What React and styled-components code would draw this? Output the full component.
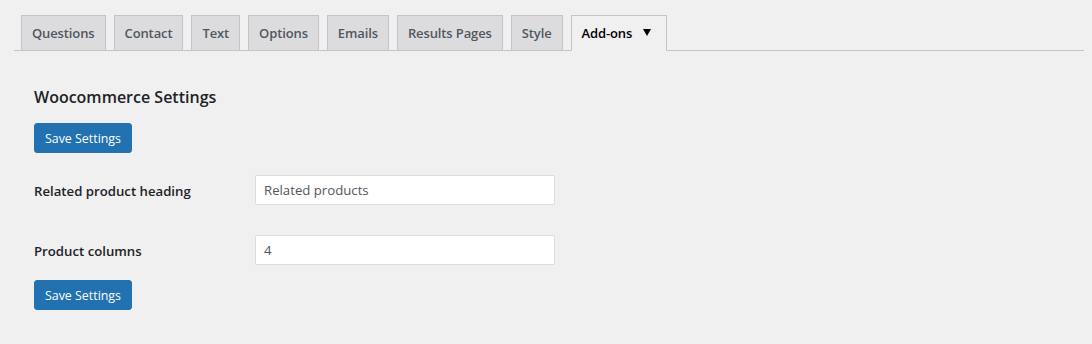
import React from "react";
import styled, { createGlobalStyle } from "styled-components";

const Global = createGlobalStyle`
  html, body { margin: 0; padding: 0; background: #f0f0f1; }
  body { font-family: "Open Sans", "Noto Sans", sans-serif; color: #1d2327; }
  * { box-sizing: border-box; }
`;

const Page = styled.div`
  padding: 15px 8px 30px 14px;
`;

const TabBar = styled.nav`
  display: flex;
  align-items: flex-end;
  gap: 8px;
  padding-left: 7px;
  border-bottom: 1px solid #c3c4c7;
`;

const Tab = styled.a`
  display: flex;
  align-items: center;
  gap: 11px;
  height: 36px;
  margin-bottom: -1px;
  padding: 0 ${(p) => (p.$active ? "15px" : "10px")} 0 10px;
  border: 1px solid #c3c4c7;
  border-bottom-color: ${(p) => (p.$active ? "#f0f0f1" : "#c3c4c7")};
  background: ${(p) => (p.$active ? "#f0f0f1" : "#dcdcde")};
  color: ${(p) => (p.$active ? "#000" : "#50575e")};
  font-size: 13px;
  font-weight: 600;
  letter-spacing: -0.12px;
  text-decoration: none;
  white-space: nowrap;
`;

const Caret = styled.svg`
  width: 8px;
  height: 7px;
  margin-top: -2px;
`;

const Content = styled.div`
  padding: 34px 0 0 20px;
`;

const Heading = styled.h2`
  margin: 0 0 14px;
  font-size: 16px;
  line-height: 24px;
  font-weight: 600;
  color: #1d2327;
`;

const Button = styled.button`
  display: block;
  height: 30px;
  padding: 0 10px;
  border: 1px solid #2271b1;
  border-radius: 3px;
  background: #2271b1;
  color: #fff;
  font-family: inherit;
  font-size: 12.4px;
  cursor: pointer;
`;

const Form = styled.div`
  display: grid;
  grid-template-columns: 221px 300px;
  margin: 7px 0 0;
`;

const Label = styled.label`
  display: flex;
  align-items: center;
  height: 60px;
  padding-top: 1px;
  font-size: 13.2px;
  font-weight: 600;
  color: #1d2327;
`;

const Cell = styled.div`
  display: flex;
  align-items: center;
  height: 60px;
`;

const Input = styled.input`
  width: 300px;
  height: 30px;
  padding: 0 8px;
  border: 1px solid #dcdcde;
  border-radius: 2px;
  background: #fff;
  color: #50575e;
  font-family: inherit;
  font-size: 13.2px;
  outline: none;
`;

const tabs = ["Questions", "Contact", "Text", "Options", "Emails", "Results Pages", "Style"];

export default function App() {
  return (
    <>
      <Global />
      <Page>
        <TabBar>
          {tabs.map((t) => (
            <Tab key={t} href="#">{t}</Tab>
          ))}
          <Tab $active href="#">
            Add-ons
            <Caret viewBox="0 0 8 7" aria-hidden="true">
              <path d="M0 0 H8 L4 7 Z" fill="#000" />
            </Caret>
          </Tab>
        </TabBar>
        <Content>
          <Heading>Woocommerce Settings</Heading>
          <Button>Save Settings</Button>
          <Form>
            <Label htmlFor="rph">Related product heading</Label>
            <Cell>
              <Input id="rph" defaultValue="Related products" />
            </Cell>
            <Label htmlFor="pc">Product columns</Label>
            <Cell>
              <Input id="pc" defaultValue="4" />
            </Cell>
          </Form>
          <Button>Save Settings</Button>
        </Content>
      </Page>
    </>
  );
}
